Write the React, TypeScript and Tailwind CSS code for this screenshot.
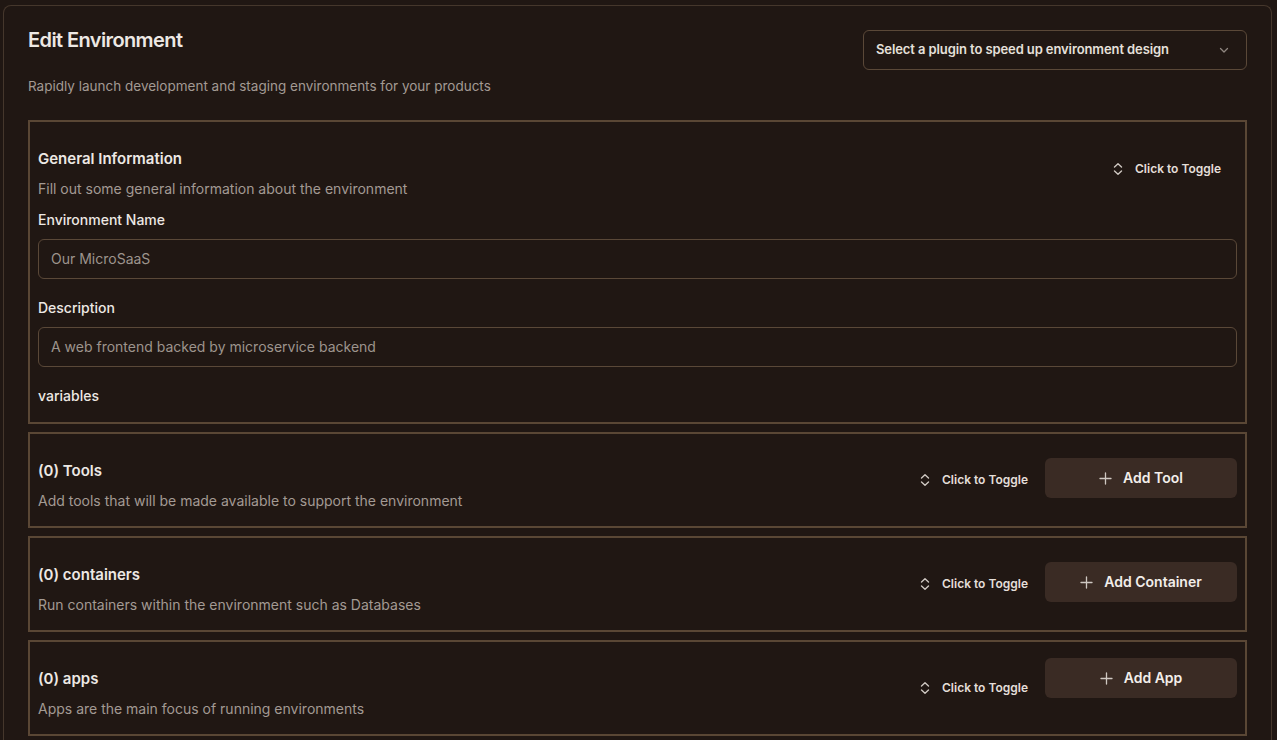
import React from "react";

const ToggleIcon = () => (
  <svg width="12" height="14" viewBox="0 0 12 14" fill="none" stroke="currentColor" strokeWidth="1.4" strokeLinecap="round" strokeLinejoin="round">
    <path d="M2.5 5 L6 1.8 L9.5 5" />
    <path d="M2.5 9 L6 12.2 L9.5 9" />
  </svg>
);

const PlusIcon = () => (
  <svg width="13" height="13" viewBox="0 0 13 13" fill="none" stroke="currentColor" strokeWidth="1.3" strokeLinecap="round">
    <path d="M6.5 1 V12" />
    <path d="M1 6.5 H12" />
  </svg>
);

const Toggle = () => (
  <button className="flex h-10 items-center gap-[11px] px-4 pt-1 text-xs font-semibold text-[#e4ded9]">
    <span className="text-[#cfc8c2]"><ToggleIcon /></span>
    Click to Toggle
  </button>
);

const Section = ({ title, desc, add, raised, children }: { title: string; desc: string; add?: string; raised?: boolean; children?: React.ReactNode }) => (
  <div className={add ? "border-2 border-[#5a4735] px-2 pt-[25px] pb-[15px]" : "border-2 border-[#5a4735] px-2 pt-[25px] pb-4"}>
    <div className="flex items-start justify-between">
      <div className="flex flex-col">
        <div className="text-[15px] leading-6 font-semibold text-[#ede8e4]">{title}</div>
        <div className="mt-2 text-sm leading-5 text-[#a39a93]">{desc}</div>
      </div>
      <div className={add ? "-mt-px flex items-start gap-px" : "flex items-center gap-px"}>
        <Toggle />
        {add && (
          <button className={(raised ? "-mt-2 " : "") + "flex h-10 w-[192px] items-center justify-center gap-[11px] rounded-md bg-[#3a2b24] text-sm font-semibold text-[#f2eeea]"}>
            <span className="text-[#cfc8c2]"><PlusIcon /></span>
            {add}
          </button>
        )}
      </div>
    </div>
    {children}
  </div>
);

const Field = ({ label, value }: { label: string; value: string }) => (
  <div className="flex flex-col">
    <div className="text-sm leading-5 font-medium text-[#ede8e4]">{label}</div>
    <div className="mt-[9px] flex h-10 items-center rounded-md border border-[#5a4838] px-3 text-sm text-[#9d948d]">{value}</div>
  </div>
);

export default function App() {
  return (
    <div className="min-h-screen bg-[#201713] pt-[5px] pl-[3px] pr-[5px]" style={{ fontFamily: "Inter, 'Noto Sans', sans-serif" }}>
      <div className="rounded-lg border border-[#45372c] border-b-0 px-6 pt-6 pb-6">
        <div className="flex items-start justify-between">
          <div className="flex flex-col">
            <h1 className="text-xl leading-5 font-semibold tracking-[-0.6px] text-[#ede8e4]">Edit Environment</h1>
            <p className="mt-[26px] text-[13.5px] leading-5 text-[#a39a93]">Rapidly launch development and staging environments for your products</p>
          </div>
          <button className="flex h-10 w-[384px] items-center justify-between rounded-md border border-[#5a4838] pl-3 pr-4 text-[13px] font-semibold tracking-[-0.1px] text-[#e6e0db]">
            <span>Select a plugin to speed up environment design</span>
            <svg width="12" height="12" viewBox="0 0 12 12" fill="none" stroke="#8f8680" strokeWidth="1.3" strokeLinecap="round" strokeLinejoin="round">
              <path d="M2.5 4.5 L6 8 L9.5 4.5" />
            </svg>
          </button>
        </div>
        <div className="mt-6 flex flex-col gap-2">
          <Section title="General Information" desc="Fill out some general information about the environment">
            <div className="mt-[11px] flex flex-col gap-[19px]">
              <Field label="Environment Name" value="Our MicroSaaS" />
              <Field label="Description" value="A web frontend backed by microservice backend" />
              <div className="text-sm leading-5 font-medium text-[#ede8e4]">variables</div>
            </div>
          </Section>
          <Section title="(0) Tools" desc="Add tools that will be made available to support the environment" add="Add Tool" />
          <Section title="(0) containers" desc="Run containers within the environment such as Databases" add="Add Container" />
          <Section title="(0) apps" desc="Apps are the main focus of running environments" add="Add App" raised />
        </div>
      </div>
    </div>
  );
}
